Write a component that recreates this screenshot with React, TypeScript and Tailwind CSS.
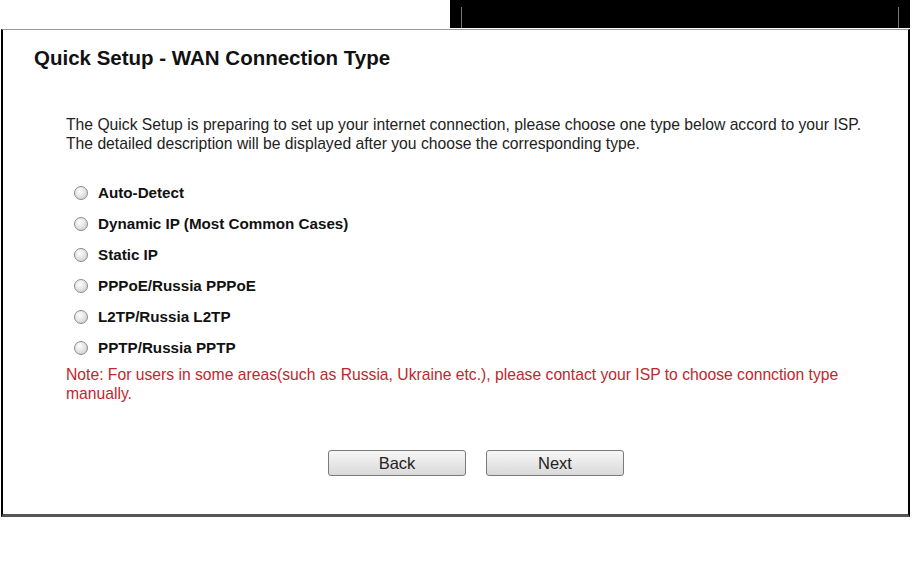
import React from 'react';

const options = [
  'Auto-Detect',
  'Dynamic IP (Most Common Cases)',
  'Static IP',
  'PPPoE/Russia PPPoE',
  'L2TP/Russia L2TP',
  'PPTP/Russia PPTP',
];

function Radio() {
  return (
    <span className="inline-block h-[14px] w-[14px] shrink-0 rounded-full border border-[#8c8c8c] bg-[radial-gradient(circle_at_40%_35%,#ffffff_0%,#e0e0e0_55%,#c4c4c4_100%)]" />
  );
}

export default function App() {
  return (
    <div className="h-[568px] w-[918px] bg-white font-['Liberation_Sans',Arial,sans-serif] text-[#222]">
      {/* top black strip */}
      <div className="flex h-[28px] pl-[450px]">
        <div className="flex h-full w-[460px] bg-black px-[11px] pt-[7px]">
          <div className="flex-1 border-l border-r border-[#777]" />
        </div>
      </div>

      {/* main panel */}
      <div className="ml-[1px] mt-[1px] flex h-[488px] w-[909px] flex-col border-b-[3px] border-l-2 border-r-2 border-t border-b-[#555] border-l-black border-r-black border-t-[#9a9a9a] pl-[31px] pt-[17px]">
        <h1 className="text-[20.5px] font-bold leading-[22px] text-[#111]">
          Quick Setup - WAN Connection Type
        </h1>

        <div className="mt-[46px] pl-[32px] text-[15.7px] leading-[19px]">
          <p>
            The Quick Setup is preparing to set up your internet connection, please choose one type below accord to your ISP.
            <br />
            The detailed description will be displayed after you choose the corresponding type.
          </p>

          <div className="mt-[24px] flex flex-col">
            {options.map((o) => (
              <label key={o} className="flex h-[31px] items-center pl-[8px]">
                <Radio />
                <span className="ml-[10px] text-[15.2px] font-bold leading-[31px] text-[#111]">{o}</span>
              </label>
            ))}
          </div>

          <p className="mt-[2px] text-[#c0272d]">
            Note: For users in some areas(such as Russia, Ukraine etc.), please contact your ISP to choose connction type
            <br />
            manually.
          </p>
        </div>

        <div className="mt-[47px] flex gap-[20px] pl-[294px]">
          {['Back', 'Next'].map((b) => (
            <button
              key={b}
              className="h-[26px] w-[138px] rounded-[3px] border border-[#7a7a7a] bg-[linear-gradient(#f7f7f7,#e8e8e8_50%,#d9d9d9)] text-[16.5px] leading-[24px] text-[#222]"
            >
              {b}
            </button>
          ))}
        </div>
      </div>
    </div>
  );
}
